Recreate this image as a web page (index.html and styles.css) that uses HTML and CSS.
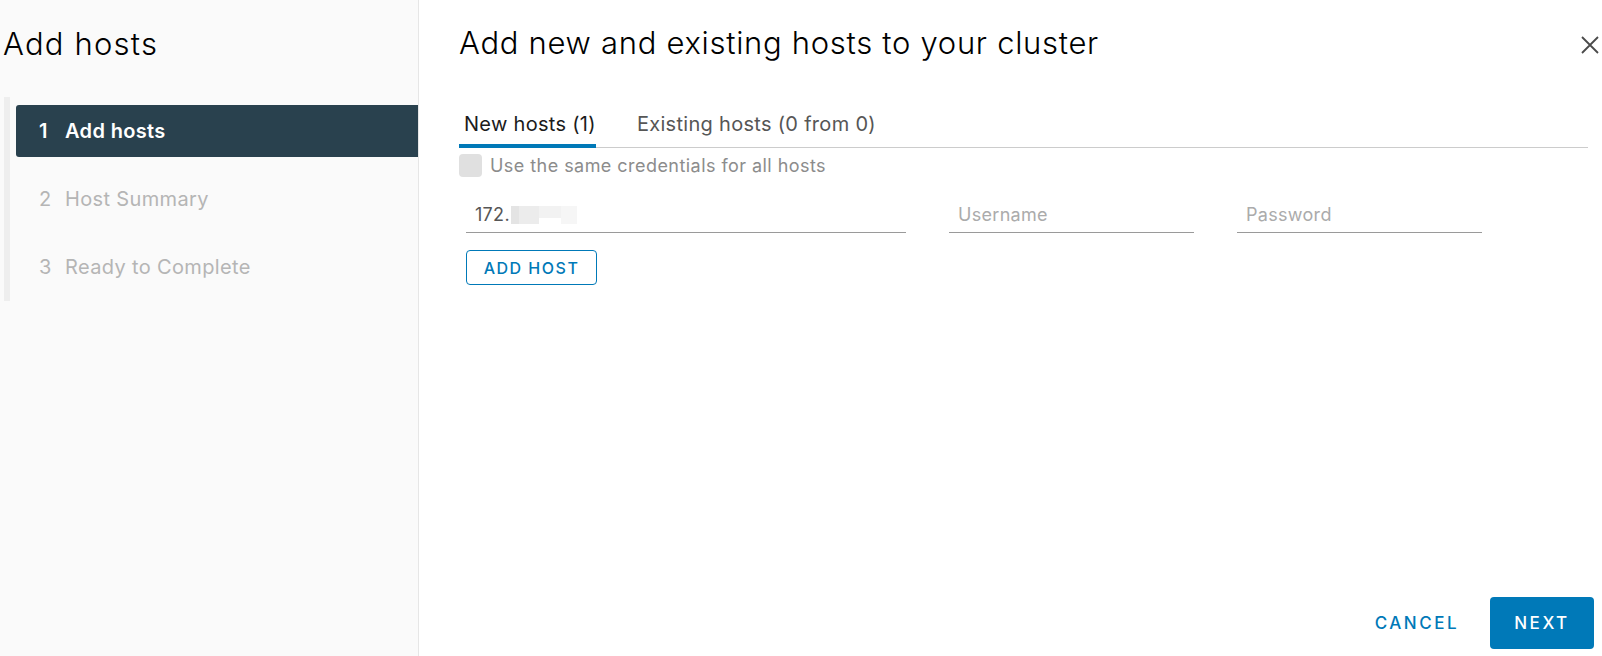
FILE: index.html
```html
<!DOCTYPE html>
<html>
  <head>
    <title>Add hosts</title>
    <link rel="stylesheet" href="styles.css">
  </head>
  <body>
    <div class="wizard">
      <aside class="sidebar">
        <h1 class="wizard-title">Add hosts</h1>
        <ul class="steps">
          <li class="step active">
            <span class="num">1</span>
            <span class="label">Add hosts</span>
          </li>
          <li class="step">
            <span class="num">2</span>
            <span class="label">Host Summary</span>
          </li>
          <li class="step">
            <span class="num">3</span>
            <span class="label">Ready to Complete</span>
          </li>
        </ul>
      </aside>

      <main class="content">
        <header class="content-header">
          <h2>Add new and existing hosts to your cluster</h2>
          <button class="close" aria-label="Close">
            <svg width="18" height="18" viewBox="0 0 18 18">
              <path d="M1 1 L17 17 M17 1 L1 17" stroke="#4a4a4a" stroke-width="1.8" fill="none" />
            </svg>
          </button>
        </header>

        <div class="tabs">
          <span class="tab active">New hosts (1)</span>
          <span class="tab">Existing hosts (0 from 0)</span>
        </div>

        <label class="check">
          <span class="box"></span>
          <span>Use the same credentials for all hosts</span>
        </label>

        <div class="host-row">
          <div class="field host">
            172.<span class="blur">
              <i class="b1"></i><i class="b2"></i><i class="b3"></i><i class="b4"></i>
            </span>
          </div>
          <div class="field cred placeholder">Username</div>
          <div class="field cred placeholder">Password</div>
        </div>

        <button class="btn-outline">ADD HOST</button>

        <footer class="footer">
          <button class="btn-flat">CANCEL</button>
          <button class="btn-primary">NEXT</button>
        </footer>
      </main>
    </div>
  </body>
</html>
```

FILE: styles.css
```css
body,
html {
  height: 100%;
  width: 100%;
  margin: 0;
  overflow: hidden;
}

body {
  background: #ffffff;
  font-family: Inter, 'Open Sans', sans-serif;
  color: #000;
}

button {
  font-family: inherit;
  cursor: pointer;
}

.wizard {
  display: flex;
  height: 100%;
}

/* left column */
.sidebar {
  width: 418px;
  flex: none;
  background: #fafafa;
  border-right: 1px solid #e6e6e6;
}

.wizard-title {
  margin: 24px 0 33px 3px;
  font-size: 31px;
  line-height: 40px;
  font-weight: 300;
  letter-spacing: 1.2px;
}

.steps {
  list-style: none;
  margin: 0 0 0 4px;
  padding: 8px 0;
  border-left: 6px solid #eeeeee;
  display: flex;
  flex-direction: column;
  gap: 16px;
}

.step {
  display: flex;
  align-items: center;
  height: 52px;
  margin-left: 6px;
  padding-left: 23px;
  font-size: 20px;
  letter-spacing: 0.35px;
  color: #b5b5b5;
  border-radius: 3px 0 0 3px;
}

.step .num {
  width: 26px;
}

.step.active {
  background: #29414e;
  color: #fff;
  font-weight: 600;
}

/* right column */
.content {
  flex: 1;
  position: relative;
  display: flex;
  flex-direction: column;
  padding: 0 8px 7px 40px;
}

.content-header h2 {
  margin: 23px 0 37px 0;
  font-size: 31px;
  line-height: 40px;
  font-weight: 300;
  letter-spacing: 0.7px;
}

.close {
  position: absolute;
  top: 36px;
  right: 3px;
  padding: 0;
  border: 0;
  background: none;
  line-height: 0;
}

.tabs {
  display: flex;
  gap: 36px;
  margin-right: 6px;
  border-bottom: 1px solid #cccccc;
}

.tab {
  padding: 4px 0 0 5px;
  line-height: 40px;
  font-size: 20px;
  letter-spacing: 0.3px;
  color: #565656;
  border-bottom: 4px solid transparent;
  margin-bottom: -1px;
}

.tab.active {
  color: #1b1b1b;
  border-bottom-color: #0079b8;
}

.check {
  display: flex;
  align-items: center;
  gap: 8px;
  margin-top: 6px;
  height: 23px;
  font-size: 18px;
  letter-spacing: 0.45px;
  color: #8c8c8c;
}

.check .box {
  width: 23px;
  height: 23px;
  background: #e0e0e0;
  border-radius: 4px;
}

.host-row {
  display: flex;
  gap: 43px;
  margin: 25px 0 0 7px;
}

.field {
  box-sizing: border-box;
  height: 31px;
  padding: 0 9px 5px 9px;
  display: flex;
  align-items: center;
  font-size: 18px;
  letter-spacing: 0.3px;
  color: #565656;
  border-bottom: 1px solid #9a9a9a;
}

.field.host {
  width: 440px;
}

.field.cred {
  width: 245px;
}

.placeholder {
  color: #ababab;
}

.blur {
  display: inline-flex;
  align-items: flex-start;
  height: 18px;
  margin-left: 1px;
}

.blur i {
  display: block;
  height: 18px;
}

.blur .b1 {
  width: 8px;
  background: #e4e4e4;
}

.blur .b2 {
  width: 20px;
  background: #ececec;
}

.blur .b3 {
  width: 22px;
  height: 12px;
  background: #f2f2f2;
}

.blur .b4 {
  width: 16px;
  background: #f6f6f6;
}

.btn-outline {
  align-self: flex-start;
  margin: 17px 0 0 7px;
  width: 131px;
  height: 35px;
  border: 1px solid #0079b8;
  border-radius: 4px;
  background: #fff;
  color: #0079b8;
  font-size: 16px;
  font-weight: 500;
  letter-spacing: 1.5px;
}

.footer {
  margin-top: auto;
  display: flex;
  justify-content: flex-end;
  gap: 7px;
}

.btn-flat,
.btn-primary {
  height: 52px;
  padding: 0 24px;
  border: 0;
  border-radius: 4px;
  font-size: 17px;
  font-weight: 500;
  letter-spacing: 2.5px;
}

.btn-flat {
  background: none;
  color: #0079b8;
}

.btn-primary {
  width: 104px;
  background: #0079b8;
  color: #fff;
}
```
